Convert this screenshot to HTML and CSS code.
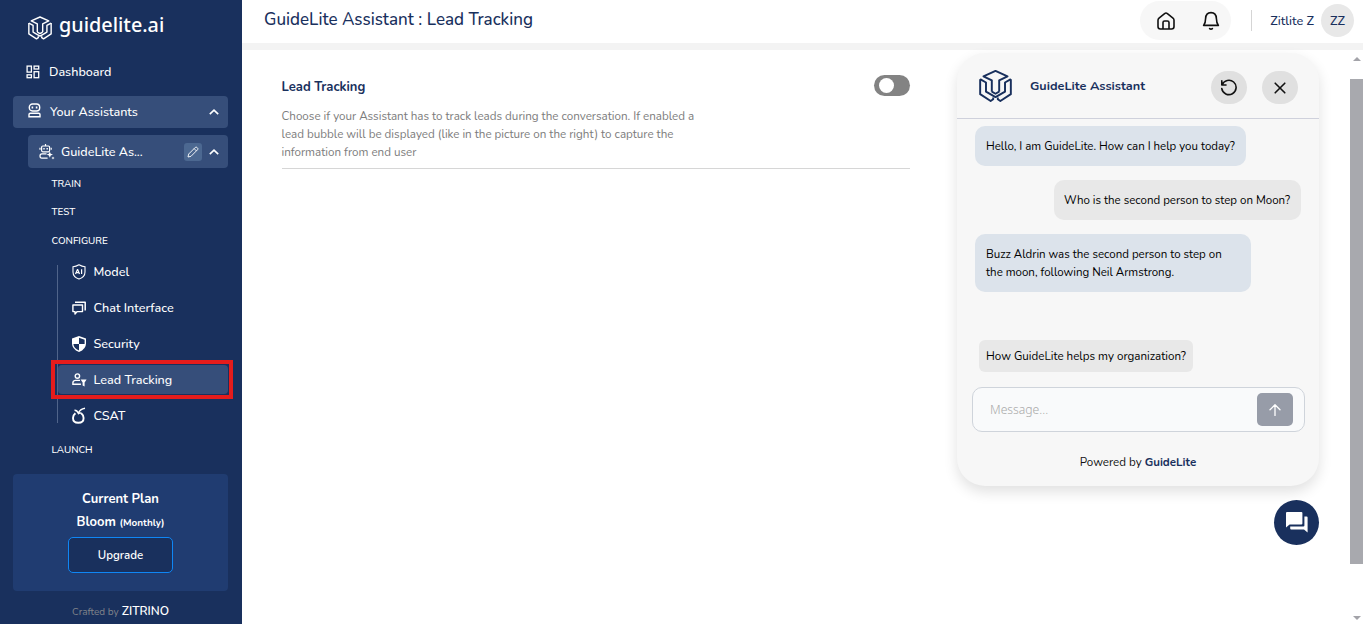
FILE: index.html
```html
<!DOCTYPE html>
<html lang="en">
<head>
    <meta charset="UTF-8">
    <meta name="viewport" content="width=device-width, initial-scale=1.0">
    <title>GuideLite Assistant : Lead Tracking</title>
    <link rel="stylesheet" href="styles.css">
</head>
<body>
    <!-- logo shared by the sidebar and the chat header -->
    <svg class="defs" width="0" height="0">
        <symbol id="logo" viewBox="0 0 34 34">
            <g fill="none" stroke="currentColor" stroke-width="2" stroke-linejoin="round">
                <path d="M13.2 22.8V11.2L4.6 7 17 1.4 29.4 7 20.8 11.2V22.8"/>
                <path d="M13.2 22.8 17 25 20.8 22.8"/>
                <path d="M1.2 10V25.4L12 32.4 14.6 30.6V28.8"/>
                <path d="M1.2 10 7.2 13.4V22.8L17 28.4 26.8 22.8V13.4L32.8 10"/>
                <path d="M32.8 10V25.4L22 32.4 19.4 30.6V28.8"/>
            </g>
        </symbol>
    </svg>

    <div class="app">
        <aside class="sidebar">
            <div class="brand">
                <svg class="brand-logo"><use href="#logo"/></svg>
                <span>guidelite.ai</span>
            </div>

            <a class="nav-row dashboard">
                <svg width="14" height="14" viewBox="0 0 14 14" fill="none" stroke="currentColor" stroke-width="1.3">
                    <rect x="1.1" y="1.1" width="4.3" height="6"/>
                    <rect x="8.1" y="1.1" width="4.6" height="2.9"/>
                    <rect x="1.1" y="9.8" width="4.3" height="2.9"/>
                    <rect x="8.1" y="6.7" width="4.6" height="6"/>
                </svg>
                <span>Dashboard</span>
            </a>

            <a class="nav-row assistants">
                <svg width="13" height="15" viewBox="0 0 13 15" fill="none" stroke="currentColor" stroke-width="1.4">
                    <rect x="1.3" y="1" width="10.4" height="7" rx="3.2"/>
                    <path d="M1 13.8V11.6Q1 10.2 2.4 10.2H10.6Q12 10.2 12 11.6V13.8Z"/>
                    <path d="M4.4 3.5v2M8.6 3.5v2" stroke-width="1.6"/>
                </svg>
                <span>Your Assistants</span>
                <svg class="chevron" viewBox="0 0 10 6"><path d="M.8 5.2 5 1.2l4.2 4"/></svg>
            </a>

            <a class="nav-row current">
                <svg width="16" height="16" viewBox="0 0 16 16" fill="none" stroke="currentColor" stroke-width="1.2">
                    <path d="M6.5 0v2"/>
                    <rect x="2.6" y="2" width="8" height="5.8" rx="1.2"/>
                    <path d="M1 3.8v2M12.2 3.8v2"/>
                    <path d="M5 4v1.6M8.2 4v1.6" stroke-width="1.4"/>
                    <path d="M7.5 9.8H2.8Q1 9.8 1 12t1.8 2.2H8.6"/>
                    <path d="M10.8 7.4l.9 2.3 2.3.9-2.3.9-.9 2.3-.9-2.3-2.3-.9 2.3-.9zM14 12.4l.5 1.1 1.1.5-1.1.5-.5 1.1-.5-1.1-1.1-.5 1.1-.5z" fill="currentColor" stroke="none"/>
                </svg>
                <span>GuideLite As...</span>
                <i class="edit">
                    <svg width="12" height="12" viewBox="0 0 12 12" fill="none" stroke="currentColor" stroke-width=".9">
                        <path d="M1 11l.7-3L8.3 1.4q.8-.7 1.6 0l.7.7q.7.8 0 1.6L4 10.3zM7.1 2.6l2.3 2.3"/>
                    </svg>
                </i>
                <svg class="chevron" viewBox="0 0 10 6"><path d="M.8 5.2 5 1.2l4.2 4"/></svg>
            </a>

            <div class="group train">TRAIN</div>
            <div class="group test">TEST</div>
            <div class="group configure">CONFIGURE</div>

            <nav class="sub-nav">
                <a class="sub-item model">
                    <svg width="14" height="16" viewBox="0 0 14 16" fill="none" stroke="currentColor">
                        <path d="M7 .8q3 1.8 6 2v5.1q0 5-6 7.2-6-2.2-6-7.2V2.8q3-.2 6-2z" stroke-width="1.1"/>
                        <path d="M3.5 10 5.4 5.6h.3L7.5 10M4.2 8.7h2.7M9.6 5.3V10" stroke-width="1.2"/>
                    </svg>
                    <span>Model</span>
                </a>
                <a class="sub-item chat-ui">
                    <svg width="14" height="14" viewBox="0 0 14 14" fill="none" stroke="currentColor" stroke-width="1.4" stroke-linejoin="round">
                        <path d="M.9 4h9.6v6.6H5.2L3 12.9V10.6H.9z"/>
                        <path d="M3 1.2h10.2V9.4" stroke-width="1.5"/>
                    </svg>
                    <span>Chat Interface</span>
                </a>
                <a class="sub-item security">
                    <svg width="14" height="16" viewBox="0 0 14 16">
                        <path d="M7 0 0 2.6v4.8Q0 13 7 16q7-3 7-8.6V2.6z" fill="currentColor"/>
                        <path d="M7 1.7v6.2H1.4V3.7zM7 7.9h5.6Q12.4 12 7 14.4z" fill="#19305d" transform="matrix(-1 0 0 1 14 0)"/>
                    </svg>
                    <span>Security</span>
                </a>
                <a class="sub-item lead active">
                    <svg width="15" height="14" viewBox="0 0 15 14" fill="none" stroke="currentColor" stroke-width="1.4">
                        <circle cx="5.4" cy="3.1" r="2.2"/>
                        <path d="M8 7.4H3.2Q.9 7.8.9 9.8v1.5h8"/>
                        <path d="M8.6 6.6h6l-2 3v4l-2-1V9.6z" fill="currentColor" stroke="none"/>
                    </svg>
                    <span>Lead Tracking</span>
                </a>
                <a class="sub-item csat">
                    <svg width="14" height="17" viewBox="0 0 14 17" fill="none" stroke="currentColor">
                        <path d="M3.4 6.3Q1 8.3 1 11q0 4.8 5.3 4.8t5.3-4.8q0-2.7-2.4-4.7" stroke-width="1.9"/>
                        <path d="M2.5 3.2Q5 3 6.3 6.2 8 2 13 1.2M6.3 6.2 9.4 6" stroke-width="1.4"/>
                    </svg>
                    <span>CSAT</span>
                </a>
            </nav>

            <div class="group launch">LAUNCH</div>

            <div class="plan">
                <div class="plan-title">Current Plan</div>
                <div class="plan-name">Bloom <small>(Monthly)</small></div>
                <button class="upgrade">Upgrade</button>
            </div>

            <div class="crafted"><span>Crafted by</span> <b>ZITRINO</b></div>
        </aside>

        <main class="main">
            <header class="topbar">
                <h1>GuideLite Assistant : Lead Tracking</h1>
                <div class="quick">
                    <svg width="18" height="18" viewBox="0 0 18 18" fill="none" stroke="currentColor" stroke-width="1.6" stroke-linejoin="round">
                        <path d="M1 8.2V14.6Q1 17 3.4 17H14.6Q17 17 17 14.6V8.2Q17 7 16 6.2L10.4 1.6Q9 .5 7.6 1.6L2 6.2Q1 7 1 8.2z"/>
                        <path d="M6 17V10.6Q6 9 7.6 9h2.8Q12 9 12 10.6V17"/>
                    </svg>
                    <svg width="18" height="20" viewBox="0 0 18 20" fill="none" stroke="currentColor" stroke-width="1.6" stroke-linecap="round" stroke-linejoin="round">
                        <path d="M1.6 14.4Q3.6 12 3.6 7.6 3.8 1.6 9 1.6t5.4 6q0 4.4 2 6.8z"/>
                        <path d="M7.6 17.6Q9 18.8 10.4 17.6"/>
                    </svg>
                </div>
                <div class="divider"></div>
                <span class="user-name">Zitlite Z</span>
                <div class="avatar">ZZ</div>
            </header>

            <div class="content">
                <section class="setting">
                    <div class="setting-head">
                        <h2>Lead Tracking</h2>
                        <div class="toggle"><i></i></div>
                    </div>
                    <p>Choose if your Assistant has to track leads during the conversation. If enabled a<br>lead bubble will be displayed (like in the picture on the right) to capture the<br>information from end user</p>
                </section>

                <section class="preview">
                    <div class="chat">
                        <div class="chat-head">
                            <svg class="chat-logo"><use href="#logo"/></svg>
                            <b>GuideLite Assistant</b>
                            <button class="round">
                                <svg width="18" height="18" viewBox="0 0 18 18" fill="none" stroke="currentColor" stroke-width="1.6" stroke-linecap="round" stroke-linejoin="round">
                                    <path d="M1.8 1.8V6H6M2.2 5.8A7.2 7.2 0 1 1 1.8 9.6"/>
                                </svg>
                            </button>
                            <button class="round">
                                <svg width="12" height="12" viewBox="0 0 12 12" fill="none" stroke="currentColor" stroke-width="1.6" stroke-linecap="round">
                                    <path d="M1.2 1.2l9.6 9.6M10.8 1.2 1.2 10.8"/>
                                </svg>
                            </button>
                        </div>
                        <div class="messages">
                            <div class="bubble bot hello">Hello, I am GuideLite. How can I help you today?</div>
                            <div class="bubble user">Who is the second person to step on Moon?</div>
                            <div class="bubble bot answer">Buzz Aldrin was the second person to step on<br>the moon, following Neil Armstrong.</div>
                        </div>
                        <div class="suggestion">How GuideLite helps my organization?</div>
                        <div class="composer">
                            <span>Message...</span>
                            <button class="send">
                                <svg width="12" height="12" viewBox="0 0 12 12" fill="none" stroke="currentColor" stroke-width="1.3" stroke-linecap="round" stroke-linejoin="round">
                                    <path d="M6 11.4V.8M1 5.8l5-5 5 5"/>
                                </svg>
                            </button>
                        </div>
                        <div class="powered">Powered by <b>GuideLite</b></div>
                    </div>
                    <button class="fab">
                        <svg width="22" height="21" viewBox="0 0 22 21" fill="currentColor">
                            <path d="M1 0H15.4q1 0 1 1V11.6q0 1-1 1H3.6L0 15.4V1Q0 0 1 0z"/>
                            <path d="M18.4 4.4h2.2q1 0 1 1V20.6L18 17.4H5.2q-1 0-1-1v-1.8H17.4q1 0 1-1z"/>
                        </svg>
                    </button>
                </section>

                <div class="scrollbar">
                    <i class="arrow up"></i>
                    <div class="thumb"></div>
                    <i class="arrow down"></i>
                </div>
            </div>
        </main>
    </div>
</body>
</html>
```
FILE: styles.css
```css
* {
    margin: 0;
    padding: 0;
    box-sizing: border-box;
}

body {
    font-family: Nunito, Lato, sans-serif;
    font-size: 12.6px;
    color: #111;
    overflow: hidden;
}

button {
    border: none;
    font: inherit;
    color: inherit;
}

svg {
    display: block;
    flex-shrink: 0;
}

.defs {
    position: absolute;
}

.app {
    display: flex;
    height: 624px;
    background: #fff;
}

/* sidebar */
.sidebar {
    width: 242px;
    flex-shrink: 0;
    background: #19305d;
    color: #fff;
    padding: 12px 14px 0 13px;
}

.brand {
    display: flex;
    align-items: center;
    gap: 7px;
    height: 30px;
    padding-left: 15px;
    font: 500 19.8px/26px 'Noto Sans', sans-serif;
}

.brand span {
    margin-top: -4px;
}

.brand-logo {
    width: 24px;
    height: 24px;
    margin-top: 2px;
}

.nav-row {
    display: flex;
    align-items: center;
    border-radius: 4px;
    font-weight: 500;
}

.dashboard {
    height: 32px;
    margin-top: 14px;
    padding-left: 13px;
    gap: 9px;
}

.assistants {
    height: 32px;
    margin-top: 8px;
    padding: 0 9px 0 15px;
    gap: 9px;
    background: #364e7a;
}

.dashboard span,
.assistants span {
    margin-top: -2px;
}

.assistants svg:first-child {
    margin-top: -3px;
}

.current {
    height: 33px;
    margin: 7px 0 0 15px;
    padding: 0 9px 0 11px;
    gap: 6px;
    background: #364e7a;
}

.chevron {
    width: 10px;
    height: 6px;
    margin-left: auto;
    fill: none;
    stroke: #fff;
    stroke-width: 1.6;
}

.edit {
    display: flex;
    align-items: center;
    justify-content: center;
    width: 18px;
    height: 18px;
    margin: 0 1px 0 auto;
    border-radius: 3px;
    background: #4c6891;
}

.edit + .chevron {
    margin-left: 0;
}

.group {
    height: 14px;
    padding-left: 38.5px;
    font-size: 9.9px;
    line-height: 14px;
    font-weight: 500;
}

.train {
    margin-top: 9px;
}

.test {
    margin-top: 14px;
}

.configure {
    margin-top: 15px;
}

.sub-nav {
    display: flex;
    flex-direction: column;
    gap: 7px;
    height: 158px;
    margin: 17px 0 0 44px;
    border-left: 1px solid #50648a;
}

.sub-item {
    position: relative;
    display: flex;
    align-items: center;
    flex-shrink: 0;
    height: 29px;
    padding-left: 14px;
    border-radius: 4px;
    font-weight: 500;
}

.sub-item:first-child {
    margin-top: -8px;
}

.sub-item svg {
    margin-right: auto;
}

.sub-item span {
    width: 134.5px;
}

.sub-item.active {
    background: #364e7a;
}

/* red marker frame over the active item */
.sub-item.active::after {
    content: '';
    position: absolute;
    inset: -5px -5px -5px -7px;
    border: 4px solid #e51c1c;
}

.launch {
    margin-top: 20px;
}

.plan {
    display: flex;
    flex-direction: column;
    align-items: center;
    height: 117px;
    margin-top: 17px;
    padding-top: 16px;
    border-radius: 4px;
    background: #203c71;
    font-size: 13px;
    font-weight: 700;
}

.plan-title {
    line-height: 18px;
}

.plan-name {
    margin-top: 5px;
    line-height: 18px;
}

.plan-name small {
    font-size: 9.9px;
}

.upgrade {
    width: 105px;
    height: 36px;
    margin-top: 5px;
    border: 1px solid #0f86f5;
    border-radius: 5px;
    background: #19305d;
    font-size: 11.5px;
    font-weight: 600;
}

.crafted {
    margin-top: 12px;
    text-align: center;
    font-size: 12px;
    line-height: 16px;
}

.crafted span {
    color: #80838a;
    font-size: 10px;
}

.crafted b {
    font-weight: 600;
}

/* main column */
.main {
    flex: 1;
    display: flex;
    flex-direction: column;
}

.topbar {
    display: flex;
    align-items: center;
    height: 50px;
    padding: 0 9px 9px 22px;
    border-bottom: 7px solid #f3f3f3;
    color: #19305d;
}

.topbar h1 {
    margin: 5px auto 0 0;
    font-size: 17px;
    font-weight: 500;
}

.quick {
    display: flex;
    align-items: center;
    justify-content: space-between;
    width: 91px;
    height: 39px;
    padding: 0 11px 0 17px;
    margin-top: 7px;
    border-radius: 20px;
    background: #f7f7f7;
    color: #111;
}

.divider {
    width: 1px;
    height: 21px;
    margin: 7px 18px 0 20px;
    background: #d5d5d5;
}

.user-name {
    margin-top: 7px;
    font-weight: 500;
}

.avatar {
    width: 33px;
    height: 33px;
    margin: 7px 0 0 7px;
    border-radius: 50%;
    background: #e8e8e8;
    line-height: 34px;
    text-align: center;
    font-weight: 500;
}

.content {
    display: flex;
    flex: 1;
}

.setting {
    width: 628.5px;
    height: 119px;
    margin-left: 39.5px;
    padding-top: 25px;
    border-bottom: 1px solid #d6d6d6;
}

.setting-head {
    display: flex;
    align-items: center;
    justify-content: space-between;
    height: 21px;
}

.setting h2 {
    margin-top: 2px;
    color: #19305d;
    font-size: 13px;
    font-weight: 700;
}

.toggle {
    width: 36px;
    height: 21px;
    padding: 3px 5px;
    border-radius: 11px;
    background: #838383;
}

.toggle i {
    display: block;
    width: 15px;
    height: 15px;
    border-radius: 50%;
    background: #fff;
}

.setting p {
    margin-top: 11px;
    color: #7c7c7c;
    font-size: 11.62px;
    line-height: 18px;
    white-space: nowrap;
}

/* chat preview */
.preview {
    width: 362px;
    margin: 3px 0 0 47px;
}

.chat {
    height: 433px;
    border-radius: 28px;
    background: #f7f7f7;
    box-shadow: 0 6px 14px rgba(0, 0, 0, .12);
}

.chat-head {
    display: flex;
    align-items: center;
    height: 66px;
    padding: 2px 21px 0 22px;
    border-bottom: 1px solid #cfd1dc;
}

.chat-logo {
    width: 33px;
    height: 34px;
    margin-top: -2px;
    color: #19305d;
}

.chat-head b {
    margin: -2px auto 0 18px;
    color: #19305d;
    font-size: 12.7px;
    font-weight: 700;
}

.round {
    display: flex;
    align-items: center;
    justify-content: center;
    width: 36px;
    height: 33px;
    margin-top: 2px;
    border-radius: 18px;
    background: #e0e0e0;
}

.round + .round {
    margin-left: 15px;
}

.messages {
    display: flex;
    flex-direction: column;
    align-items: flex-start;
    gap: 14px;
    padding: 7px 18px 0;
    color: #000;
    font-size: 11.5px;
    line-height: 18px;
}

.bubble {
    padding: 11px;
    border-radius: 10px;
    white-space: nowrap;
}

.bot {
    background: #dce3eb;
}

.hello {
    width: 271px;
}

.user {
    width: 247px;
    align-self: flex-end;
    padding-left: 10px;
    background: #e8e8e8;
}

.answer {
    width: 276px;
    height: 58px;
}

.suggestion {
    width: 214px;
    height: 32px;
    margin: 48px 0 0 22px;
    padding-left: 7px;
    border-radius: 6px;
    background: #e8e8e8;
    color: #000;
    font-size: 11.6px;
    line-height: 32px;
    white-space: nowrap;
}

.composer {
    display: flex;
    align-items: center;
    justify-content: space-between;
    width: 333px;
    height: 45px;
    margin: 15px 0 0 15px;
    padding: 0 11px 0 17px;
    border: 1px solid #cfd4db;
    border-radius: 10px;
    background: #f9fafb;
    color: #a8a8a8;
    font: 300 12.2px 'Noto Sans', sans-serif;
}

.send {
    display: flex;
    align-items: center;
    justify-content: center;
    width: 36px;
    height: 33px;
    border-radius: 5px;
    background: #979ca8;
    color: #fff;
}

.powered {
    margin-top: 21px;
    text-align: center;
    font-size: 11.6px;
    line-height: 18px;
}

.powered b {
    color: #19305d;
    font-weight: 700;
}

.fab {
    display: flex;
    align-items: center;
    justify-content: center;
    width: 45px;
    height: 45px;
    margin: 14px 0 0 auto;
    border-radius: 50%;
    background: #19305d;
    color: #fff;
}

/* scrollbar */
.scrollbar {
    display: flex;
    flex-direction: column;
    align-items: center;
    width: 13px;
    margin-left: auto;
    padding: 7px 0 4px;
}

.thumb {
    width: 13px;
    height: 485px;
    margin-top: 18px;
    background: #a8a9ae;
}

.arrow {
    border: 4px solid transparent;
    border-top: none;
    border-bottom: 4px solid #a3a3a9;
}

.arrow.down {
    margin-top: auto;
    border-top: 4px solid #a3a3a9;
    border-bottom: none;
}
```
